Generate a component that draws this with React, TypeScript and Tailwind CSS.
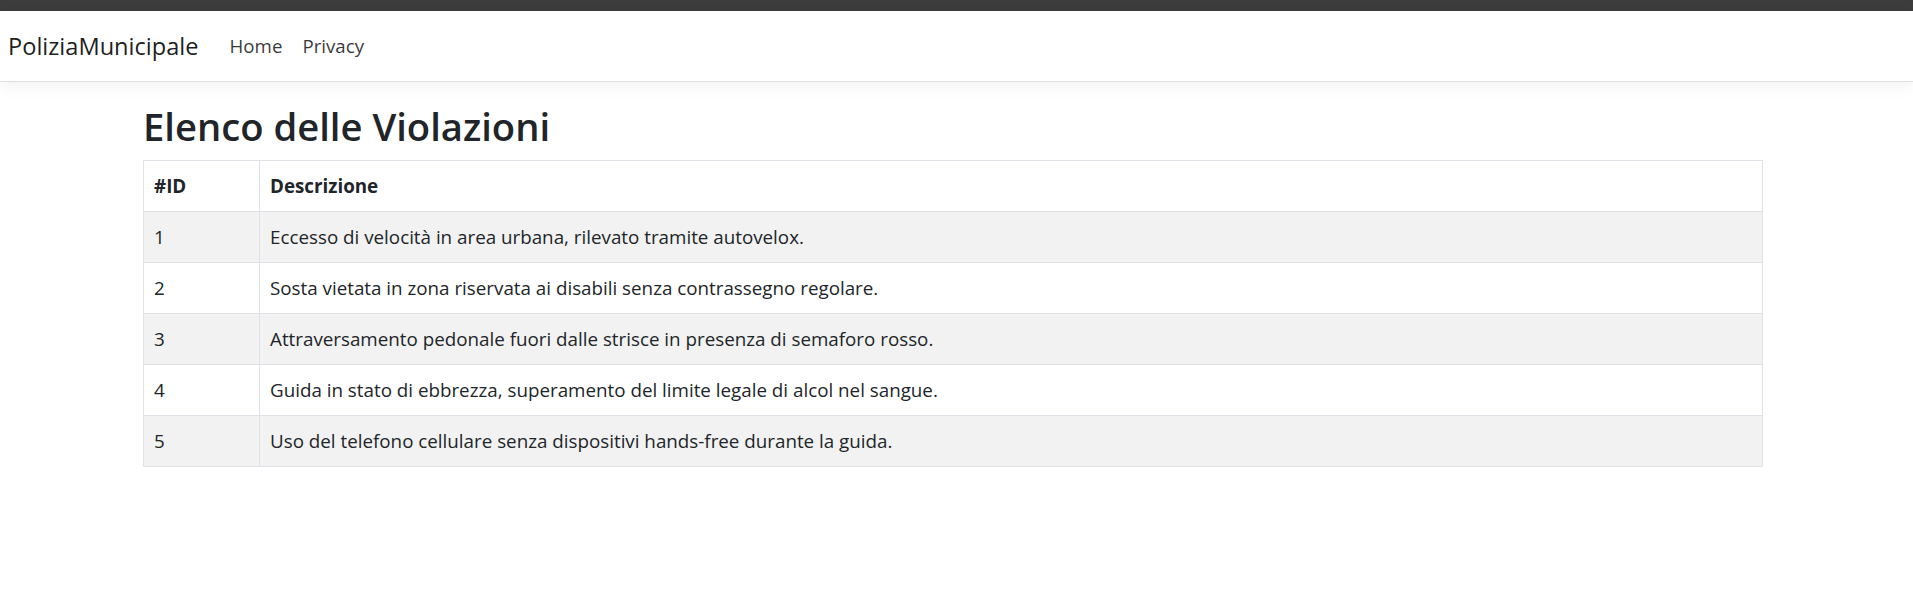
const violazioni = [
  { id: 1, descrizione: 'Eccesso di velocità in area urbana, rilevato tramite autovelox.' },
  { id: 2, descrizione: 'Sosta vietata in zona riservata ai disabili senza contrassegno regolare.' },
  { id: 3, descrizione: 'Attraversamento pedonale fuori dalle strisce in presenza di semaforo rosso.' },
  { id: 4, descrizione: 'Guida in stato di ebbrezza, superamento del limite legale di alcol nel sangue.' },
  { id: 5, descrizione: 'Uso del telefono cellulare senza dispositivi hands-free durante la guida.' },
]

export default function App() {
  return (
    <div className="min-h-[602px] bg-white text-[#212529] font-['Open_Sans',sans-serif]">
      <div className="h-[11px] bg-[#3c3c3c]" />

      {/* Navbar */}
      <nav className="flex h-[71px] items-center border-b border-[#dee2e6] bg-white pl-[8px] shadow-[0_5px_15px_rgba(0,0,0,0.05)]">
        <a className="mr-[21px] text-[23.6px] leading-[37px] text-black/90">PoliziaMunicipale</a>
        <a className="px-[10px] text-[18.7px] leading-[30px] text-black/80">Home</a>
        <a className="px-[10px] text-[18.7px] leading-[30px] text-black/80">Privacy</a>
      </nav>

      {/* Contenuto */}
      <main className="ml-[143px] mt-[20px] w-[1620px]">
        <h2 className="mb-[10px] text-[38.2px] font-semibold leading-[48px]">Elenco delle Violazioni</h2>
        <table className="w-full border-collapse border border-[#dee2e6] text-[18.8px] leading-[30px]">
          <thead>
            <tr>
              <th className="w-[116px] border border-[#dee2e6] px-[10px] py-[10px] text-left font-bold">#ID</th>
              <th className="border border-[#dee2e6] px-[10px] py-[10px] text-left font-bold">Descrizione</th>
            </tr>
          </thead>
          <tbody>
            {violazioni.map((v, i) => (
              <tr key={v.id} className={i % 2 === 0 ? 'bg-[#f2f2f2]' : 'bg-white'}>
                <td className="border border-[#dee2e6] px-[10px] py-[10px]">{v.id}</td>
                <td className="border border-[#dee2e6] px-[10px] py-[10px]">{v.descrizione}</td>
              </tr>
            ))}
          </tbody>
        </table>
      </main>
    </div>
  )
}
